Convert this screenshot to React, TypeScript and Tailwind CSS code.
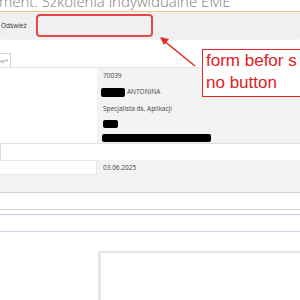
export default function App() {
  return (
    <div className="relative w-[300px] h-[300px] overflow-hidden bg-white font-['Open_Sans','Noto_Sans',sans-serif]">
      {/* page title, clipped at the top */}
      <div className="h-[11px] overflow-hidden">
        <div className="-mt-[7px] -ml-[1px] whitespace-nowrap text-[15px] leading-[16px] font-light text-[#808080]">
          ment. Szkolenia indywidualne EME
        </div>
      </div>

      {/* toolbar */}
      <div className="h-[28px] border-t border-[#f6c78d] bg-[#f0f0f0] flex items-center shadow-[0_1px_2px_rgba(0,0,0,0.06)]">
        <span className="w-[36px] pl-[1px] text-[6.5px] text-[#333]">Odśwież</span>
        <div className="w-[117px] h-[23px] rounded-[4px] border-2 border-[#e34848]" />
      </div>

      {/* tab strip */}
      <div className="mt-[14px] h-[15px] border-b border-[#e4e4e4] flex">
        <div className="w-[11px] h-full border-r border-t border-[#d6d6d6] text-[6px] leading-[14px] text-[#888] text-right pr-[2px]">
          w*
        </div>
      </div>

      {/* person info */}
      <div className="h-[75px] flex">
        <div className="w-[97px]" />
        <div className="flex-1 bg-[#f3f3f3] pl-[6px] pt-[3px] text-[6.5px] text-[#444] leading-[10px]">
          <div>70039</div>
          <div className="mt-[6px] flex items-center gap-[2px] -ml-[2px]">
            <span className="inline-block w-[24px] h-[9px] rounded-[2px] bg-black" />
            <span>ANTONINA</span>
          </div>
          <div className="mt-[7px]">Specjalista ds. Aplikacji</div>
          <div className="mt-[6px] w-[15px] h-[8px] rounded-[2px] bg-black" />
          <div className="mt-[6px] -ml-[1px] w-[109px] h-[8px] rounded-[2px] bg-black" />
        </div>
      </div>

      <div className="h-[17px] border-t border-[#e0e0e0]">
        <div className="w-[1px] h-full bg-[#dcdcdc]" />
      </div>

      {/* date row */}
      <div className="h-[32px] bg-[#f3f3f3]">
        <div className="h-[15px] flex items-center">
          <div className="w-[97px] h-full bg-white border border-l-0 border-[#e8e8e8]" />
          <span className="pl-[6px] text-[6.5px] text-[#444]">03.06.2025</span>
        </div>
      </div>

      <div className="h-[17px] border-t border-[#cfcfcf]" />
      <div className="h-[5px] border-t border-[#d6d6d6]" />
      <div className="h-[17px] border-t border-[#c8cbeb]" />
      <div className="h-[20px] border-t border-[#d2d5ef]" />

      {/* lower panel */}
      <div className="ml-[98px] h-[60px] border-t-2 border-l-[3px] border-[#e6e6e6] bg-white" />

      {/* annotation overlay */}
      <svg className="absolute left-0 top-0" width="300" height="300" viewBox="0 0 300 300">
        <line x1="195" y1="66" x2="163" y2="40" stroke="#e22a2a" strokeWidth="1.6" />
        <polygon points="160,37 169,39 164,45" fill="#e22a2a" />
      </svg>
      <div className="absolute left-[202px] top-[49px] w-[110px] h-[48px] border border-[#e02424] bg-white pl-[3px] font-['Liberation_Sans',Arial,sans-serif] text-[17px] leading-[22px] text-[#e0201f] whitespace-nowrap">
        <div>form befor s</div>
        <div>no button</div>
      </div>
    </div>
  );
}
